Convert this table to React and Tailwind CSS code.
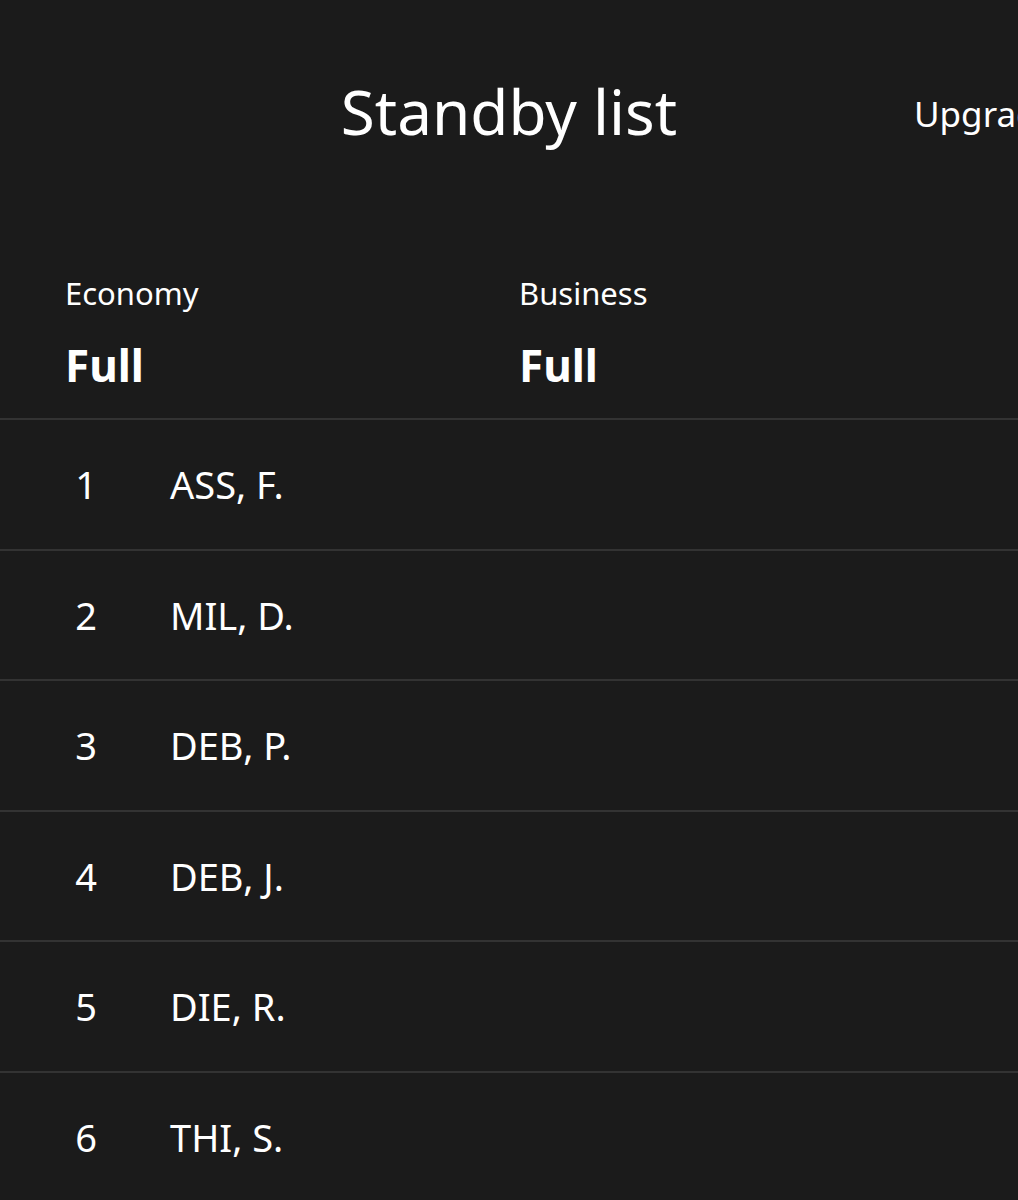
const rows = [
  { pos: 1, name: "ASS, F." },
  { pos: 2, name: "MIL, D." },
  { pos: 3, name: "DEB, P." },
  { pos: 4, name: "DEB, J." },
  { pos: 5, name: "DIE, R." },
  { pos: 6, name: "THI, S." },
];

function CabinStatus({ cabin, status }) {
  return (
    <div>
      <p className="text-[31px] leading-none text-white">{cabin}</p>
      <p className="mt-[34px] text-[44px] font-bold leading-none text-white">{status}</p>
    </div>
  );
}

export default function App() {
  return (
    <div className="min-h-[1200px] overflow-hidden bg-[#1b1b1b] font-['Noto_Sans',sans-serif] text-white">
      {/* tab strip */}
      <div className="relative flex h-[230px] items-start justify-center pt-[80px]">
        <h1 className="text-[62px] font-normal leading-none">Standby list</h1>
        <span className="absolute left-[914px] top-[96px] whitespace-nowrap text-[35px] leading-none">
          Upgrade list
        </span>
      </div>

      <div className="grid grid-cols-[454px_1fr] px-[65px] pb-[31px] pt-[48px]">
        <CabinStatus cabin="Economy" status="Full" />
        <CabinStatus cabin="Business" status="Full" />
      </div>

      <ul>
        {rows.map((r) => (
          <li key={r.pos} className="flex h-[130.5px] items-center border-t-2 border-[#333333]">
            <span className="w-[170px] pl-[56px] pr-[54px] text-center text-[38px] leading-none">{r.pos}</span>
            <span className="text-[38px] leading-none">{r.name}</span>
          </li>
        ))}
      </ul>
    </div>
  );
}
